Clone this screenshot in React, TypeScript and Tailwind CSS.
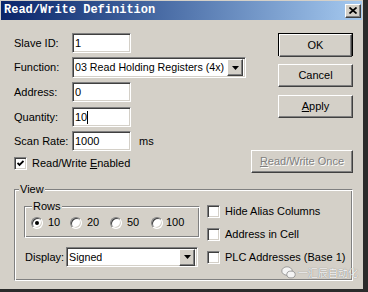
import React from 'react';

const sunken =
  'border border-t-[#808080] border-l-[#808080] border-b-white border-r-white shadow-[inset_1px_1px_0_#404040,inset_-1px_-1px_0_#d4d0c8]';
const raised =
  'border border-t-white border-l-white border-b-[#404040] border-r-[#404040] shadow-[inset_-1px_-1px_0_#808080,inset_1px_1px_0_#d4d0c8]';
const etched =
  'border border-t-[#808080] border-l-[#808080] border-b-white border-r-white shadow-[inset_1px_1px_0_white,inset_-1px_-1px_0_#808080]';

const DownArrow = () => (
  <div className={`w-[16px] h-[17px] shrink-0 bg-[#d4d0c8] flex items-center justify-center ${raised}`}>
    <svg width="7" height="4" viewBox="0 0 7 4">
      <polygon points="0,0 7,0 3.5,4" fill="#000" />
    </svg>
  </div>
);

const TextBox = ({ value, caret }: { value: string; caret?: boolean }) => (
  <div className={`w-[59px] h-[20px] bg-white flex items-center pl-[2px] ${sunken}`}>
    <span>{value}</span>
    {caret && <span className="w-[1px] h-[13px] bg-black" />}
  </div>
);

const Combo = ({ value, width, height }: { value: string; width: string; height: string }) => (
  <div className={`${width} ${height} bg-white flex items-center justify-between pl-[2px] pr-[2px] ${sunken}`}>
    <span className="whitespace-nowrap overflow-hidden text-[10.7px]">{value}</span>
    <DownArrow />
  </div>
);

const Check = ({ checked }: { checked?: boolean }) => (
  <div className={`w-[13px] h-[13px] bg-white flex items-center justify-center shrink-0 ${sunken}`}>
    {checked && (
      <svg width="7" height="7" viewBox="0 0 7 7">
        <polyline points="0.5,3 2.5,5 6.5,1" fill="none" stroke="#000" strokeWidth="1.8" />
      </svg>
    )}
  </div>
);

const Radio = ({ checked }: { checked?: boolean }) => (
  <div className="w-[12px] h-[12px] rounded-full bg-white flex items-center justify-center border border-t-[#808080] border-l-[#808080] border-b-white border-r-white shadow-[inset_1px_1px_0_#404040,inset_-1px_-1px_0_#d4d0c8]">
    {checked && <div className="w-[4px] h-[4px] rounded-full bg-black" />}
  </div>
);

const Button = ({ children, w = 'w-[75px]', disabled }: { children: React.ReactNode; w?: string; disabled?: boolean }) => (
  <div
    className={`${w} h-[23px] bg-[#d4d0c8] flex items-center justify-center ${raised} ${
      disabled ? 'text-[#808080] [text-shadow:1px_1px_0_#fff]' : 'text-black'
    }`}
  >
    {children}
  </div>
);

const Label = ({ children }: { children: React.ReactNode }) => (
  <div className="w-[58px] shrink-0">{children}</div>
);

export default function App() {
  return (
    <div
      className="w-[368px] h-[292px] bg-[#2b2b2b] overflow-hidden relative text-[11px] leading-[13px] text-black"
      style={{ fontFamily: '"Liberation Sans", Arial, sans-serif' }}
    >
      <div className="w-[363px] h-[289px] bg-[#d4d0c8] flex flex-col">
        {/* title bar */}
        <div className="mx-[1px] mt-[1px] h-[19px] bg-gradient-to-r from-[#0a246a] to-[#a6caf0] flex items-center justify-between pl-[3px] pr-[1px]">
          <span
            className="text-white font-bold text-[12px]"
            style={{ fontFamily: '"Liberation Mono", "Courier New", monospace' }}
          >
            Read/Write Definition
          </span>
          <div className={`w-[16px] h-[14px] bg-[#d4d0c8] flex items-center justify-center ${raised}`}>
            <svg width="8" height="7" viewBox="0 0 8 7">
              <path d="M0.5 0.5 L7.5 6.5 M7.5 0.5 L0.5 6.5" stroke="#000" strokeWidth="1.7" />
            </svg>
          </div>
        </div>

        {/* body */}
        <div className="pl-[14px] pr-[10px] pt-[13px] flex flex-col">
          <div className="flex justify-between">
            <div className="w-[232px] flex flex-col">
              <div className="flex items-center">
                <Label>Slave ID:</Label>
                <TextBox value="1" />
              </div>
              <div className="flex items-center mt-[4px]">
                <Label>Function:</Label>
                <Combo value="03 Read Holding Registers (4x)" width="w-[174px]" height="h-[21px]" />
              </div>
              <div className="flex items-center mt-[4px]">
                <Label>Address:</Label>
                <TextBox value="0" />
              </div>
              <div className="flex items-center mt-[5px]">
                <Label>Quantity:</Label>
                <TextBox value="10" caret />
              </div>
              <div className="flex items-center mt-[4px]">
                <Label>Scan Rate:</Label>
                <TextBox value="1000" />
                <span className="ml-[8px]">ms</span>
              </div>
              <div className="flex items-center gap-[5px] mt-[6px]">
                <Check checked />
                <span>
                  Read/Write <span className="underline">E</span>nabled
                </span>
              </div>
            </div>

            <div className="flex flex-col items-end">
              <div className="w-[75px] h-[23px] border border-black">
                <Button w="w-full">OK</Button>
              </div>
              <div className="mt-[8px]">
                <Button>Cancel</Button>
              </div>
              <div className="mt-[8px]">
                <Button>
                  <span className="underline">A</span>pply
                </Button>
              </div>
              <div className="mt-[32px]">
                <Button w="w-[102px]" disabled>
                  <span className="underline">R</span>ead/Write Once
                </Button>
              </div>
            </div>
          </div>

          {/* View group */}
          <div className={`mt-[16px] h-[92px] ${etched}`}>
            <div className="-mt-[7px] ml-[4px] w-fit px-[1px] bg-[#d4d0c8]">View</div>
            <div className="flex">
              <div className="ml-[9px] mt-[10px] w-[176px] flex flex-col">
                <div className={`h-[32px] ${etched}`}>
                  <div className="-mt-[7px] ml-[7px] w-fit px-[1px] bg-[#d4d0c8]">Rows</div>
                  <div className="flex items-center ml-[6px] mt-[3px]">
                    <div className="w-[39px] flex items-center gap-[5px]">
                      <Radio checked />
                      <span>10</span>
                    </div>
                    <div className="w-[40px] flex items-center gap-[5px]">
                      <Radio />
                      <span>20</span>
                    </div>
                    <div className="w-[41px] flex items-center gap-[5px]">
                      <Radio />
                      <span>50</span>
                    </div>
                    <div className="flex items-center gap-[3px]">
                      <Radio />
                      <span>100</span>
                    </div>
                  </div>
                </div>
                <div className="flex items-center mt-[9px]">
                  <div className="w-[42px] pl-[1px]">Display:</div>
                  <Combo value="Signed" width="w-[132px]" height="h-[20px]" />
                </div>
              </div>

              <div className="ml-[7px] mt-[9px] flex flex-col gap-[10px]">
                <div className="flex items-center gap-[5px]">
                  <Check />
                  <span>Hide Alias Columns</span>
                </div>
                <div className="flex items-center gap-[5px]">
                  <Check />
                  <span>Address in Cell</span>
                </div>
                <div className="flex items-center gap-[5px]">
                  <Check />
                  <span>PLC Addresses (Base 1)</span>
                </div>
              </div>
            </div>
          </div>
        </div>
      </div>

      {/* watermark */}
      <div className="absolute left-[281px] top-[266px] flex items-center gap-[2px]">
        <svg width="15" height="13" viewBox="0 0 15 13">
          <ellipse cx="6" cy="5" rx="5.2" ry="4.2" fill="#f4f4f4" stroke="#8a8a8a" strokeWidth="0.8" />
          <ellipse cx="10" cy="8.5" rx="4.2" ry="3.4" fill="#f4f4f4" stroke="#8a8a8a" strokeWidth="0.8" />
        </svg>
        <span
          className="text-[10px] text-[#f6f6f6] [text-shadow:0_0_1px_#666]"
          style={{ fontFamily: '"Noto Sans CJK SC", sans-serif' }}
        >
          一汇辰自动化
        </span>
      </div>
    </div>
  );
}
